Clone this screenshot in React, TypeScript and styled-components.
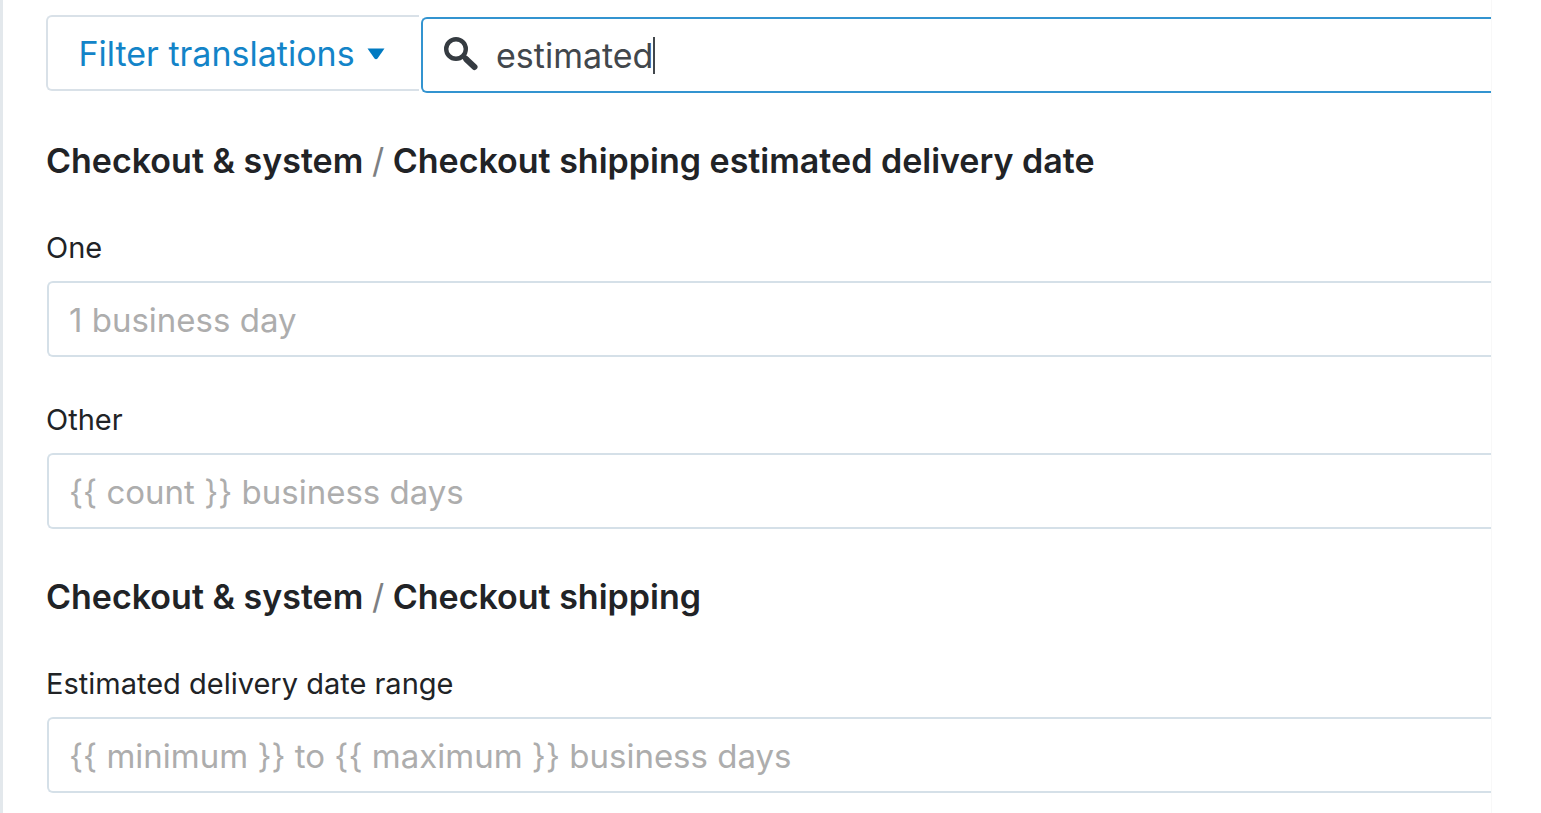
import React, { useState } from "react";
import styled, { createGlobalStyle } from "styled-components";

const GlobalStyle = createGlobalStyle`
  *, *::before, *::after { box-sizing: border-box; }
  body {
    margin: 0;
    background: #ffffff;
    color: #212326;
    font-family: Inter, "Liberation Sans", sans-serif;
  }
`;

const Page = styled.div`
  padding-right: 49px;
`;

const Panel = styled.main`
  min-height: 100vh;
  padding: 15px 0 20px 43px;
  overflow: hidden;
  border-left: 3px solid #e3e8ec;
  border-right: 1px solid #f8f8f8;
`;

const Toolbar = styled.div`
  display: flex;
  align-items: flex-start;
  gap: 2px;
`;

const FilterButton = styled.button`
  display: flex;
  flex: none;
  align-items: center;
  justify-content: center;
  gap: 12px;
  width: 373px;
  height: 76px;
  padding: 2px 4px 0 0;
  border: 2px solid #d9e1e8;
  border-right: 0;
  border-radius: 6px 0 0 6px;
  background: #ffffff;
  color: #1384c8;
  font: inherit;
  font-size: 34px;
  line-height: 40px;
  white-space: nowrap;
`;

const SearchBox = styled.label`
  display: flex;
  flex: 1;
  align-items: center;
  min-width: 0;
  height: 76px;
  margin-top: 2px;
  padding-left: 20px;
  border: 2px solid #3394d0;
  border-right: 0;
  border-radius: 6px 0 0 6px;
  cursor: text;

  svg {
    flex: none;
    margin-right: 17px;
  }
`;

const SearchInput = styled.input`
  field-sizing: content;
  min-width: 2px;
  max-width: 90%;
  padding: 2px 0 0;
  border: 0;
  outline: 0;
  background: transparent;
  color: #42474c;
  caret-color: transparent;
  font: inherit;
  font-size: 34px;
  line-height: 40px;
`;

const Caret = styled.span`
  width: 2px;
  height: 37px;
  background: #42474c;
`;

const Group = styled.section`
  margin-top: 48px;
`;

const Heading = styled.h2`
  margin: 0 0 49px;
  font-size: 34px;
  font-weight: 600;
  line-height: 40px;
`;

const Slash = styled.span`
  color: #7d7f82;
  font-weight: 400;
`;

const Field = styled.div`
  & + & {
    margin-top: 45px;
  }
`;

const Label = styled.label`
  display: block;
  margin-bottom: 15px;
  font-size: 29px;
  line-height: 36px;
`;

const TextInput = styled.input`
  display: block;
  width: calc(100% - 1px);
  height: 76px;
  margin-left: 1px;
  padding: 2px 20px 0;
  border: 2px solid #d5e0e8;
  border-right: 0;
  border-radius: 6px 0 0 6px;
  outline: 0;
  background: #ffffff;
  color: #42474c;
  font: inherit;
  font-size: 33px;
  line-height: 40px;

  &::placeholder {
    color: #adadad;
    opacity: 1;
  }
`;

const groups = [
  {
    title: "Checkout shipping estimated delivery date",
    fields: [
      { id: "one", label: "One", placeholder: "1 business day" },
      { id: "other", label: "Other", placeholder: "{{ count }} business days" },
    ],
  },
  {
    title: "Checkout shipping",
    fields: [
      {
        id: "range",
        label: "Estimated delivery date range",
        placeholder: "{{ minimum }} to {{ maximum }} business days",
      },
    ],
  },
];

function SearchIcon() {
  return (
    <svg width="36" height="36" viewBox="0 0 36 36" fill="none" stroke="#353b41" aria-hidden="true">
      <circle cx="13" cy="12" r="9.8" strokeWidth="4.4" />
      <path d="M20 19 L24 22.5" strokeWidth="5" />
      <path d="M23.5 22.5 L31.5 30" strokeWidth="6" strokeLinecap="round" />
    </svg>
  );
}

function ArrowIcon() {
  return (
    <svg width="18" height="12" viewBox="0 0 18 12" fill="#007ac1" aria-hidden="true">
      <path d="M0.5 0.5 H17.5 L10.5 10.5 Q9 12 7.5 10.5 Z" />
    </svg>
  );
}

export default function App() {
  const [query, setQuery] = useState("estimated");

  return (
    <Page>
      <GlobalStyle />
      <Panel>
        <Toolbar>
          <FilterButton type="button">
            Filter translations
            <ArrowIcon />
          </FilterButton>
          <SearchBox>
            <SearchIcon />
            <SearchInput
              type="text"
              aria-label="Search translations"
              value={query}
              onChange={(event) => setQuery(event.target.value)}
            />
            <Caret aria-hidden="true" />
          </SearchBox>
        </Toolbar>
        {groups.map((group) => (
          <Group key={group.title}>
            <Heading>
              Checkout &amp; system <Slash>/</Slash> {group.title}
            </Heading>
            {group.fields.map((field) => (
              <Field key={field.id}>
                <Label htmlFor={field.id}>{field.label}</Label>
                <TextInput id={field.id} type="text" placeholder={field.placeholder} />
              </Field>
            ))}
          </Group>
        ))}
      </Panel>
    </Page>
  );
}
